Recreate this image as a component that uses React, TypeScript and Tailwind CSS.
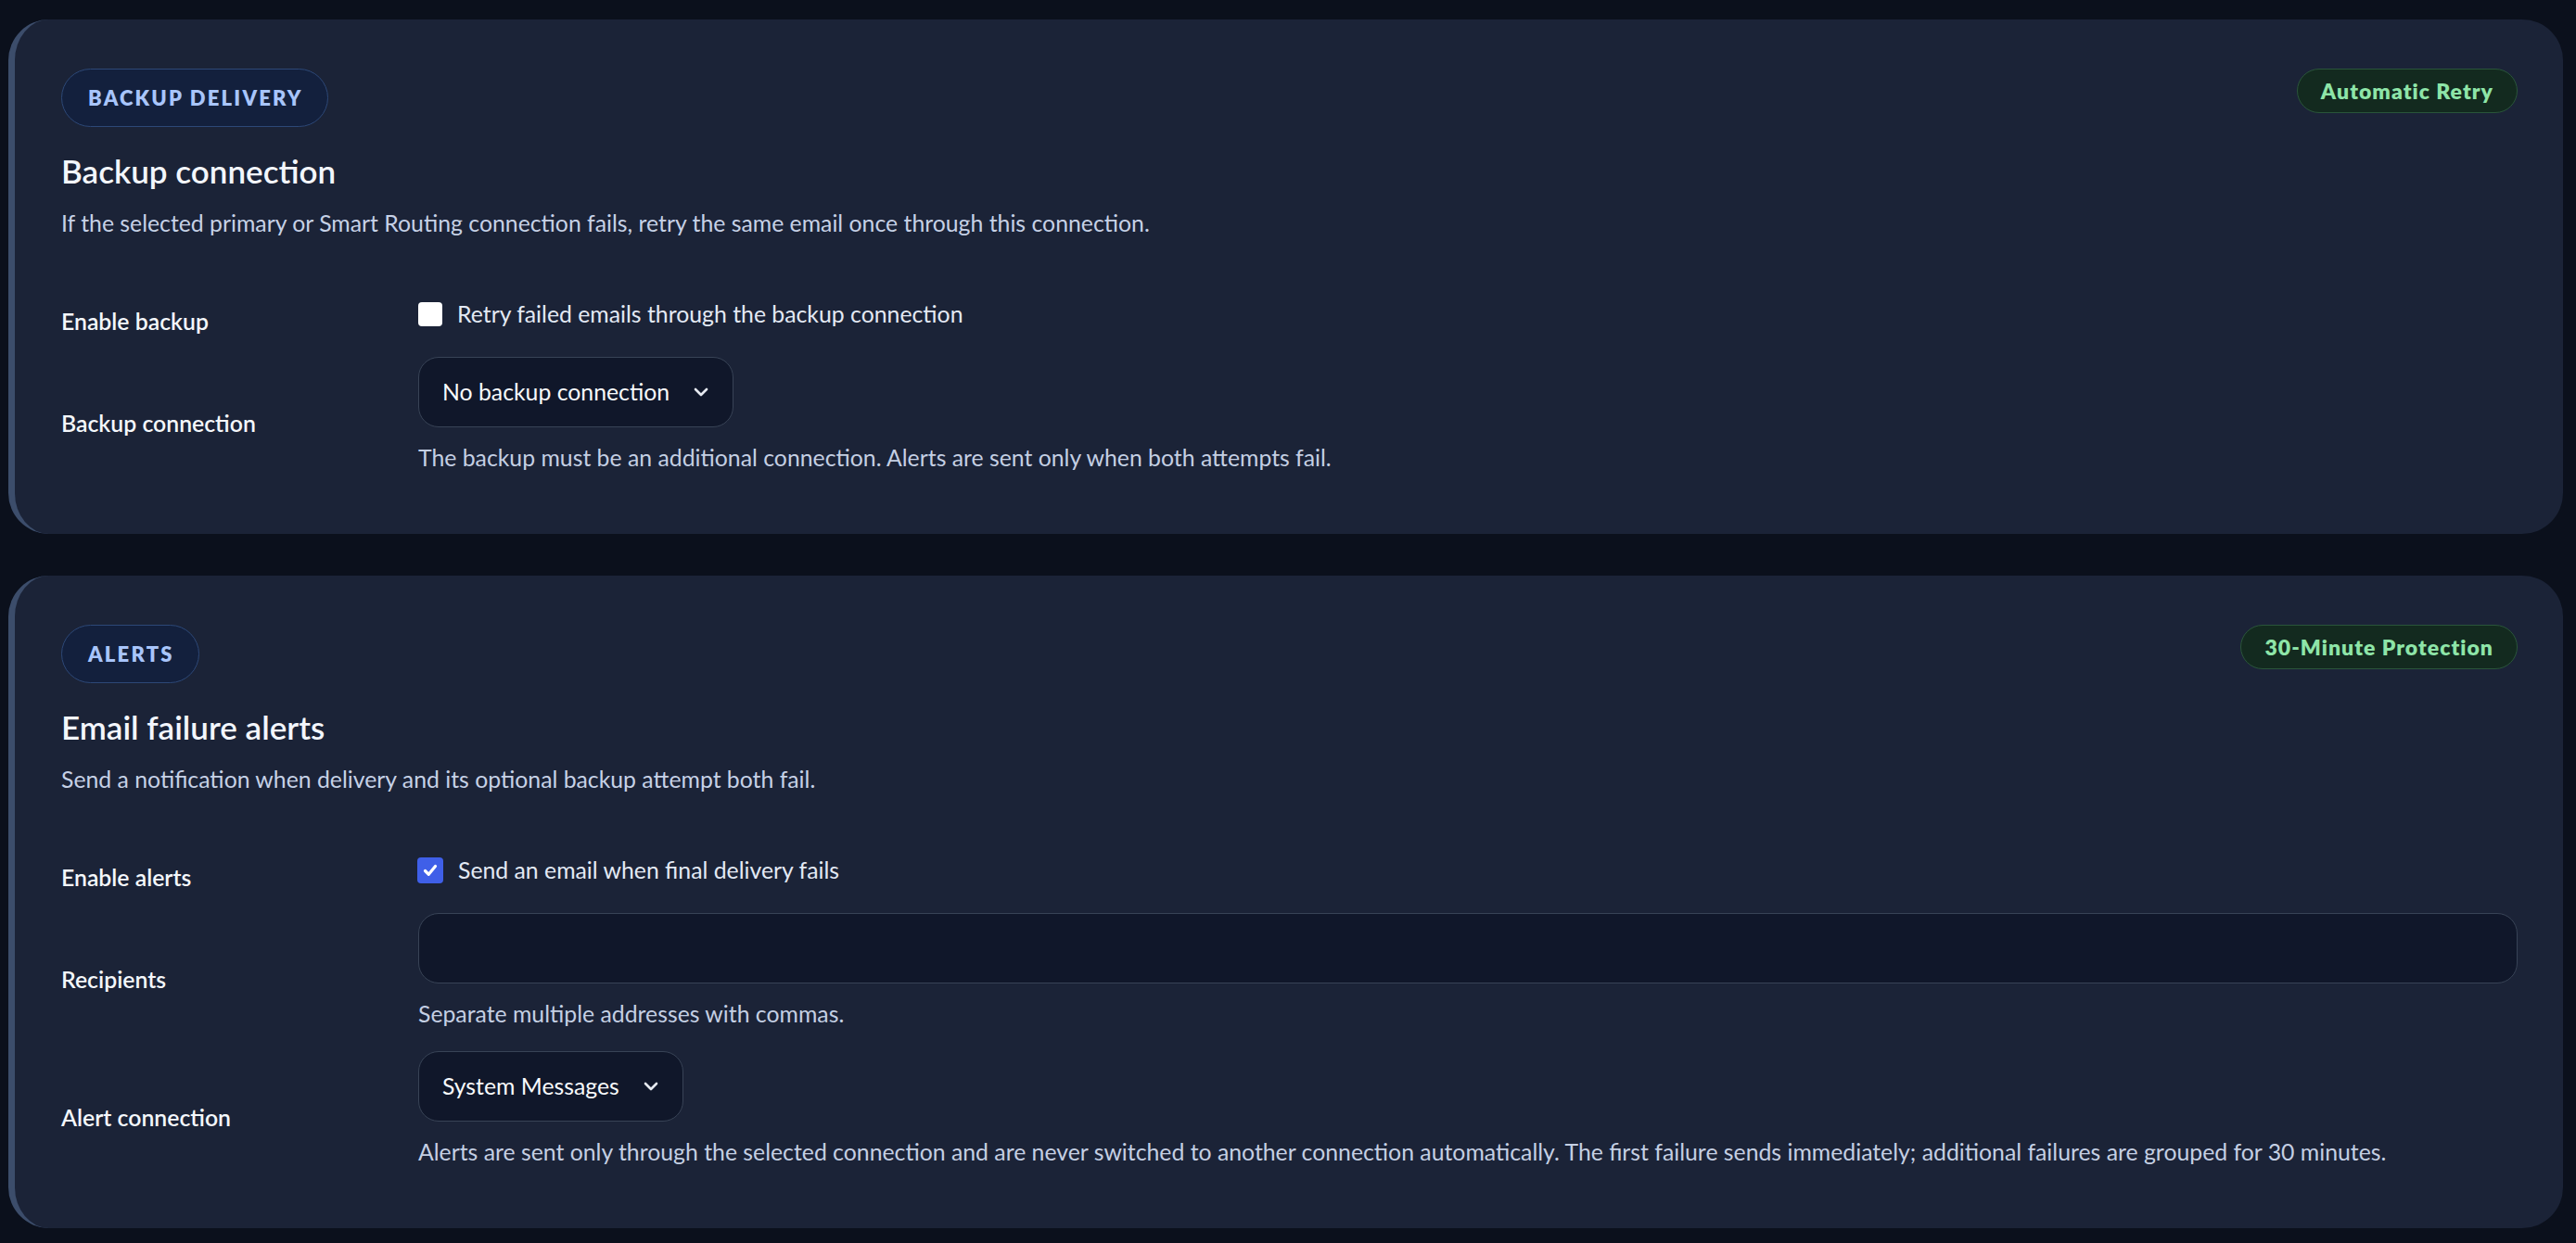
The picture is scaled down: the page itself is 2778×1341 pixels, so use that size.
import React from "react";

function Chevron() {
  return (
    <svg width="16" height="10" viewBox="0 0 16 10" fill="none" className="shrink-0">
      <path d="M2 2l6 6 6-6" stroke="#e5e9f0" strokeWidth="2.6" strokeLinecap="round" strokeLinejoin="round" />
    </svg>
  );
}

function Select({ value }: { value: string }) {
  return (
    <div className="inline-flex h-[76px] items-center gap-[26px] rounded-[22px] border border-[#384356] bg-[#10172a] pl-[25px] pr-[26px] text-[24.8px] leading-[36px] text-[#f8fafc]">
      <span>{value}</span>
      <Chevron />
    </div>
  );
}

function Checkbox({ checked }: { checked: boolean }) {
  if (checked) {
    return (
      <span className="-ml-[1px] flex h-[28px] w-[28px] shrink-0 items-center justify-center rounded-[4px] bg-[#3f5fe8]">
        <svg width="18" height="18" viewBox="0 0 18 18" fill="none">
          <path d="M3.5 9.5l3.8 3.8L14.5 4.5" stroke="#ffffff" strokeWidth="3.2" strokeLinecap="round" strokeLinejoin="round" />
        </svg>
      </span>
    );
  }
  return <span className="h-[26px] w-[26px] shrink-0 rounded-[4px] bg-white" />;
}

function CheckRow({ checked, text }: { checked: boolean; text: string }) {
  return (
    <div className="flex h-[36px] items-center gap-[16px]">
      <Checkbox checked={checked} />
      <span className="text-[24.8px] leading-[36px] text-[#e3e9f4]">{text}</span>
    </div>
  );
}

function Row({ label, children, className }: { label: string; children: React.ReactNode; className: string }) {
  return (
    <div className={`grid grid-cols-[385px_1fr] items-center ${className}`}>
      <div className="pt-[16px] text-[24.8px] font-semibold leading-[36px] text-[#f4f7fb]">{label}</div>
      <div>{children}</div>
    </div>
  );
}

function Helper({ children }: { children: React.ReactNode }) {
  return <p className="mt-[15px] text-[24.8px] leading-[36px] text-[#c4cfe3]">{children}</p>;
}

function Card({
  tag,
  badge,
  title,
  description,
  children,
}: {
  tag: string;
  badge: string;
  title: string;
  description: string;
  children: React.ReactNode;
}) {
  return (
    <section className="ml-[9px] mr-[14px] rounded-[44px] border-l-[7px] border-[#3c4d6b] bg-[#1b2337] pb-[64px] pl-[50px] pr-[49px] pt-[53px]">
      <div className="flex items-start justify-between">
        <span className="inline-flex h-[63px] items-center rounded-full border-[1.5px] border-[#2d4877] bg-[#13203d] pl-[28px] pr-[26px] text-[22px] font-extrabold tracking-[0.1em] text-[#a8c5fb]">
          {tag}
        </span>
        <span className="inline-flex h-[48px] items-center rounded-full border-[1.5px] border-[#2a553a] bg-[#132a1f] px-[25px] text-[23px] font-extrabold tracking-[0.045em] text-[#8ee5a8]">
          {badge}
        </span>
      </div>
      <h2 className="mt-[25px] text-[35px] font-semibold leading-[44px] text-[#f3f6fc]">{title}</h2>
      <p className="mt-[17px] text-[24.8px] leading-[36px] text-[#c6d1e6]">{description}</p>
      {children}
    </section>
  );
}

export default function App() {
  return (
    <div className="flex min-h-screen flex-col gap-[45px] bg-[#0b101c] pb-[17px] pt-[21px] font-['Lato',sans-serif]">
      <Card
        tag="BACKUP DELIVERY"
        badge="Automatic Retry"
        title="Backup connection"
        description="If the selected primary or Smart Routing connection fails, retry the same email once through this connection."
      >
        <Row label="Enable backup" className="mt-[54px]">
          <CheckRow checked={false} text="Retry failed emails through the backup connection" />
        </Row>
        <Row label="Backup connection" className="mt-[20px]">
          <Select value="No backup connection" />
          <Helper>The backup must be an additional connection. Alerts are sent only when both attempts fail.</Helper>
        </Row>
      </Card>
      <Card
        tag="ALERTS"
        badge="30-Minute Protection"
        title="Email failure alerts"
        description="Send a notification when delivery and its optional backup attempt both fail."
      >
        <Row label="Enable alerts" className="mt-[54px]">
          <CheckRow checked={true} text="Send an email when final delivery fails" />
        </Row>
        <Row label="Recipients" className="mt-[20px]">
          <div className="h-[76px] w-full rounded-[22px] border border-[#384356] bg-[#10172a]" />
          <Helper>Separate multiple addresses with commas.</Helper>
        </Row>
        <Row label="Alert connection" className="mt-[22px]">
          <Select value="System Messages" />
          <Helper>
            Alerts are sent only through the selected connection and are never switched to another connection
            automatically. The first failure sends immediately; additional failures are grouped for 30 minutes.
          </Helper>
        </Row>
      </Card>
    </div>
  );
}
